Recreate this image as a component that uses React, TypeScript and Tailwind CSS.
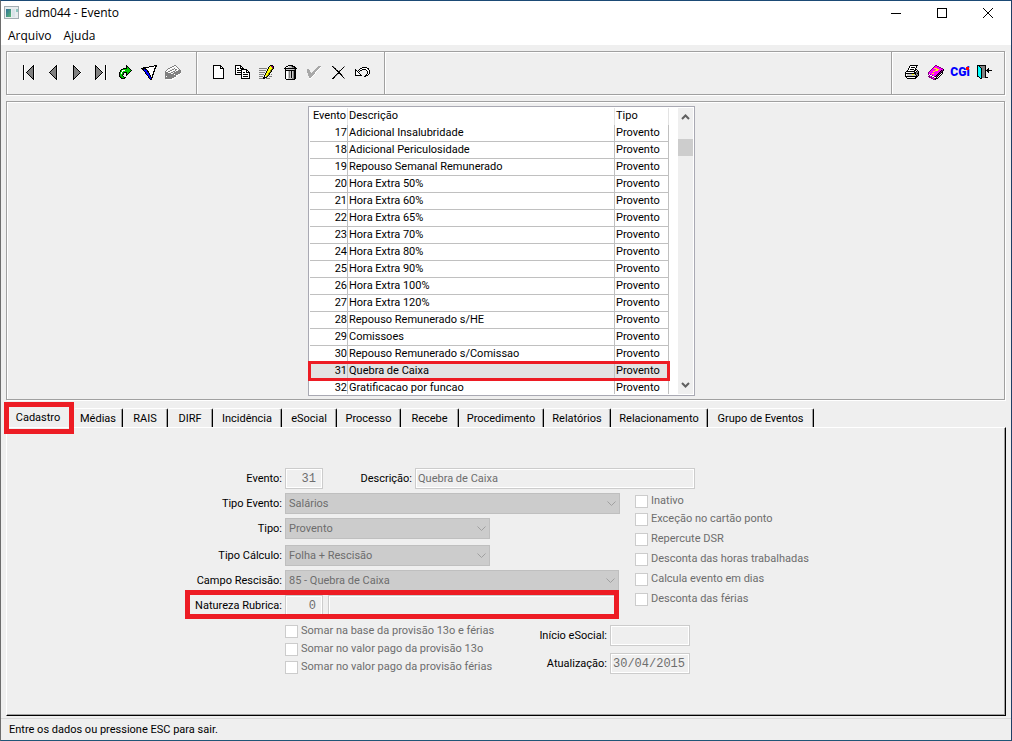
import clsx from 'clsx';
import type { ReactNode } from 'react';

const events = [
  [17, 'Adicional Insalubridade'],
  [18, 'Adicional Periculosidade'],
  [19, 'Repouso Semanal Remunerado'],
  [20, 'Hora Extra 50%'],
  [21, 'Hora Extra 60%'],
  [22, 'Hora Extra 65%'],
  [23, 'Hora Extra 70%'],
  [24, 'Hora Extra 80%'],
  [25, 'Hora Extra 90%'],
  [26, 'Hora Extra 100%'],
  [27, 'Hora Extra 120%'],
  [28, 'Repouso Remunerado s/HE'],
  [29, 'Comissoes'],
  [30, 'Repouso Remunerado s/Comissao'],
  [31, 'Quebra de Caixa'],
  [32, 'Gratificacao por funcao'],
] as const;

const tabs = [
  { label: 'Médias', width: 'w-[49px]' },
  { label: 'RAIS', width: 'w-[45px]' },
  { label: 'DIRF', width: 'w-[45px]' },
  { label: 'Incidência', width: 'w-[69px]' },
  { label: 'eSocial', width: 'w-[55px]' },
  { label: 'Processo', width: 'w-[64px]' },
  { label: 'Recebe', width: 'w-[58px]' },
  { label: 'Procedimento', width: 'w-[85px]' },
  { label: 'Relatórios', width: 'w-[67px]' },
  { label: 'Relacionamento', width: 'w-[97px]' },
  { label: 'Grupo de Eventos', width: 'w-[106px]' },
];

const palette: Record<string, string> = {
  k: '#000000',
  g: '#808080',
  l: '#a8a8a8',
  s: '#c8c8c8',
  w: '#ffffff',
  b: '#0000ff',
  n: '#000080',
  y: '#ffff00',
  o: '#808000',
  m: '#ff00ff',
  p: '#800080',
  c: '#00ffff',
  t: '#008080',
  e: '#00c800',
  d: '#006400',
};

// One character per pixel, a dot is transparent
function PixelIcon({ rows }: { rows: string[] }) {
  const width = Math.max(...rows.map((row) => row.length));
  return (
    <svg
      width={width}
      height={rows.length}
      viewBox={`0 0 ${width} ${rows.length}`}
      shapeRendering="crispEdges"
      aria-hidden="true"
    >
      {rows.map((row, y) =>
        row
          .split('')
          .map((char, x) =>
            palette[char] ? (
              <rect
                key={`${x}-${y}`}
                x={x}
                y={y}
                width="1"
                height="1"
                fill={palette[char]}
              />
            ) : null
          )
      )}
    </svg>
  );
}

const icons = {
  first: [
    'kw........kw',
    'kw.......kkw',
    'kw......kgkw',
    'kw.....kggkw',
    'kw....kgggkw',
    'kw...kggggkw',
    'kw..kgggggkw',
    'kw.kggggggkw',
    'kw..kgggggkw',
    'kw...kggggkw',
    'kw....kgggkw',
    'kw.....kggkw',
    'kw......kgkw',
    'kw.......kkw',
    'kw........kw',
  ],
  previous: [
    '.......kw',
    '......kkw',
    '.....kgkw',
    '....kggkw',
    '...kgggkw',
    '..kggggkw',
    '.kgggggkw',
    'kggggggkw',
    '.kgggggkw',
    '..kggggkw',
    '...kgggkw',
    '....kggkw',
    '.....kgkw',
    '......kkw',
    '.......kw',
  ],
  next: [
    'kw.......',
    'kkw......',
    'kgkw.....',
    'kggkw....',
    'kgggkw...',
    'kggggkw..',
    'kgggggkw.',
    'kggggggkw',
    'kgggggkw.',
    'kggggkw..',
    'kgggkw...',
    'kggkw....',
    'kgkw.....',
    'kkw......',
    'kw.......',
  ],
  last: [
    'kw........kw',
    'kkw.......kw',
    'kgkw......kw',
    'kggkw.....kw',
    'kgggkw....kw',
    'kggggkw...kw',
    'kgggggkw..kw',
    'kggggggkw.kw',
    'kgggggkw..kw',
    'kggggkw...kw',
    'kgggkw....kw',
    'kggkw.....kw',
    'kgkw......kw',
    'kkw.......kw',
    'kw........kw',
  ],
  go: [
    '.......k.....',
    '.......kk....',
    '.......kek...',
    '....kkkkeek..',
    '..kkeeeeeeek.',
    '.kewwweeeeeek',
    '.keweeeeeeek.',
    'kewedkkkeek..',
    'kewek..kek...',
    'keedk..kk....',
    'keek...k.....',
    'kdeek........',
    '.kdeekk......',
    '..kkkk.......',
  ],
  filter: [
    '.............kkk',
    '........kkkkkwkk',
    '..kkkkkkwwwwwwk.',
    'kkkkkwwwwwwwwkk.',
    '.kkbkkwwwwwwwk..',
    '..kbbbkwwwwwwk..',
    '...kbbkkwwwwkk..',
    '....kbbkwwwwk...',
    '....kbbbkwwwk...',
    '.....kbbkwwkk...',
    '......kbbkwk....',
    '.......kbkwk....',
    '.......kbbkk....',
    '........kbk.....',
    '.........kk.....',
  ],
  box: [
    '.........gg......',
    '.......ggwwg.....',
    '.....ggww..wg....',
    '...ggww..gwwwg...',
    '..gww..ggwggw.g..',
    '.gww.ggww.gwwggg.',
    'gwwggww.gg.ggggg.',
    'gggww.gg.ggggggg.',
    'ggggggw.gggggggw.',
    'gggggggggwgggww..',
    'gggggggggggww....',
    'gwgggggggggw.....',
    'gggggggggww......',
    'gggggggww........',
    '.wwwwwww.........',
  ],
  page: [
    'kkkkkkkk...',
    'kwwwwwwkk..',
    'kwwwwwwkwk.',
    'kwwwwwwkkkk',
    'kwwwwwwwwwk',
    'kwwwwwwwwwk',
    'kwwwwwwwwwk',
    'kwwwwwwwwwk',
    'kwwwwwwwwwk',
    'kwwwwwwwwwk',
    'kwwwwwwwwwk',
    'kwwwwwwwwwk',
    'kwwwwwwwwwk',
    'kkkkkkkkkkk',
  ],
  copy: [
    'kkkkkk.........',
    'kwwwwkk........',
    'kwwwwkwk.......',
    'kwkkwkkkk......',
    'kwwwwwkkkkkk...',
    'kwkkkkkwwwwkk..',
    'kwwwwwkwwwwkwk.',
    'kwkkkkkwkkwkkkk',
    'kwwwwwkwwwwwwwk',
    'kkkkkkkwkkkkkwk',
    '......kwwwwwwwk',
    '......kwkkkkkwk',
    '......kwwwwwwwk',
    '......kkkkkkkkk',
  ],
  edit: [
    '...........kkk.',
    '..........kyppk',
    '.........kyyypk',
    'gggggggg.kyyyok',
    '........kyyyok.',
    'ggggggg.kyyok..',
    '.......kyyyok..',
    'gggggg.kyyok...',
    '......kyyok....',
    'ggggg.kyyok.g..',
    '.....kyyok.....',
    'gggg.kwok.ggg..',
    '....kkkk.......',
    'ggggkk.gggg....',
  ],
  trash: [
    '....kkkkk....',
    '..kkwssgkkk..',
    '.kwwssssggkk.',
    'kkkkkkkkkkkkk',
    '.kssssssssgk.',
    '.kkkkkkkkkkk.',
    '.kwwsgsksgkk.',
    '.kwwsgsksgkk.',
    '.kwwsgsksgkk.',
    '.kwwsgsksgkk.',
    '.kwwsgsksgkk.',
    '.kwwsgsksgkk.',
    '.kwwsgsksgkk.',
    '.kwwssssggkk.',
    '..kkkkkkkkk..',
  ],
  check: [
    '...........lll',
    '..........lllw',
    '.........lllw.',
    'll......lllw..',
    'lll....lllw...',
    'lll...lllw....',
    'llll.lllw.....',
    '.lllllllw.....',
    '.llllllw......',
    '.lllllw.......',
    '..lllw........',
    '..llw.........',
    '..ww..........',
  ],
  cancel: [
    'kg..........g',
    '.kg........k.',
    '..kk......k..',
    '...kg....k...',
    '....kk.gk....',
    '.....kkk.....',
    '......kk.....',
    '.....kkkk....',
    '....kg..kk...',
    '...kg....kg..',
    '..kg......k..',
    '.kk........k.',
    'kk..........g',
  ],
  undo: [
    '.......kkkkk...',
    '.....kkwwwwwkk.',
    'k...kwwkkkkwwk.',
    'kk.kwkk....kwwk',
    'kwkwk.......kwk',
    'kwwk........kwk',
    'kwwwk.......kwk',
    'kwwwwk.....kwk.',
    'kkkkkkk...kkk..',
    '.........kk....',
  ],
  print: [
    '.....kkkkkkkk.',
    '....kwwwwwwk..',
    '....kwkkkkwk..',
    '...kwwwwwwk...',
    '...kwkkkkwkk..',
    '..kwwwwwwkkwk.',
    '.kkkkkkkkkwkgk',
    'kwwwwwwwwkkggk',
    'kkkkkkkkkkkgkk',
    'kwsssssyyskggk',
    'kwssssssssskgk',
    'kkkkkkkkkkkkk.',
    '.kwwwwwwwwkk..',
    '..kkkkkkkkk...',
  ],
  help: [
    '.......pp.......',
    '......pmmpp.....',
    '.....pmmmmmpp...',
    '....pmyyymmmmpp.',
    '...pmmmmyyymmmmk',
    '..pmmmmyyymmmkpk',
    '.pmmmyymmmmmkpk.',
    'pmmmmmmmmmmkpkk.',
    'pmmmyymmmmkpkwk.',
    'pwpmmmmmmkpkwk..',
    '.pwwpmmmkpkwk...',
    'ppmpwwpkpkwk....',
    '.pppmpwwkwk.....',
    '...ppmpkkk......',
    '.....ppk........',
  ],
  exit: [
    'kkkkkkkkk......',
    'kckgggggk......',
    'kcckggggk......',
    'kccckgggk..k...',
    'kccckgggk.kk...',
    'kccckgggkkkkkkk',
    'kccckgggk.kk...',
    'kccckgggk..k...',
    'kccckgggk......',
    'kccckgggk......',
    'kccckgggk......',
    'kkcckgggk......',
    '..kckgggkkk....',
    '...kk..........',
  ],
};

function ToolButton({
  label,
  icon,
  disabled,
}: {
  label: string;
  icon: string[];
  disabled?: boolean;
}) {
  return (
    <button
      type="button"
      aria-label={label}
      disabled={disabled}
      className="flex h-6 w-6 shrink-0 items-center justify-center"
    >
      <PixelIcon rows={icon} />
    </button>
  );
}

function Field({
  id,
  label,
  labelWidth = 'w-[97px]',
  children,
}: {
  id: string;
  label: string;
  labelWidth?: string;
  children: ReactNode;
}) {
  return (
    <div className="flex h-[21px] items-center gap-[3px]">
      <label
        htmlFor={id}
        className={clsx('shrink-0 text-right whitespace-nowrap', labelWidth)}
      >
        {label}
      </label>
      {children}
    </div>
  );
}

function TextBox({
  id,
  value,
  className,
  ariaLabel,
}: {
  id: string;
  value: string;
  className: string;
  ariaLabel?: string;
}) {
  return (
    <input
      id={id}
      type="text"
      defaultValue={value}
      aria-label={ariaLabel}
      disabled
      className={clsx(
        'h-[21px] border border-[#cccccc] bg-[#efefef] px-0.5 text-[#6d6d6d] shadow-[inset_0_0_0_1px_#fff]',
        className
      )}
    />
  );
}

function Dropdown({
  id,
  value,
  width,
}: {
  id: string;
  value: string;
  width: string;
}) {
  return (
    <div className={clsx('relative h-[21px]', width)}>
      <select
        id={id}
        disabled
        className="h-full w-full appearance-none border border-[#bfbfbf] bg-[#cccccc] px-[3px] text-[#6d6d6d] opacity-100"
      >
        <option>{value}</option>
      </select>
      <svg
        className="pointer-events-none absolute top-2 right-1"
        width="9"
        height="6"
        viewBox="0 0 9 6"
        fill="none"
        stroke="#a0a0a0"
      >
        <path d="M0.5 0.5 4.5 4.5 8.5 0.5" />
      </svg>
    </div>
  );
}

function Check({ label, height }: { label: string; height: string }) {
  return (
    <label
      className={clsx(
        'flex items-center gap-[3px] whitespace-nowrap text-[#6d6d6d]',
        height
      )}
    >
      <input
        type="checkbox"
        disabled
        className="size-[13px] shrink-0 appearance-none border border-[#cccccc] bg-white"
      />
      {label}
    </label>
  );
}

const etched =
  'border border-[#a0a0a0] shadow-[inset_1px_1px_0_#fff,1px_1px_0_#fff]';

export default function App() {
  return (
    <div className="flex min-h-screen flex-col border border-t-[#1b4a75] border-r-[#1f3f66] border-b-[#1f5677] border-l-[#6d6d6d] bg-[#efefef] font-['Roboto',sans-serif] text-[11px] leading-4 text-black">
      <header className="bg-white font-['Open_Sans',sans-serif] text-[12px]">
        <div className="flex h-6 items-center pl-[3px]">
          <svg width="16" height="14" viewBox="0 0 16 14" aria-hidden="true">
            <defs>
              <linearGradient id="screen" x1="0" y1="0" x2="1" y2="1">
                <stop offset="0" stopColor="#2c6f9a" />
                <stop offset="1" stopColor="#5cb874" />
              </linearGradient>
            </defs>
            <rect x="0.5" y="0.5" width="14" height="12" fill="#e8edef" stroke="#a3adb2" />
            <rect x="2" y="3" width="5" height="8" fill="url(#screen)" />
            <path d="M8 3h3v8H8z" fill="#d8e3e8" />
            <path d="M12 3h2v3h-2z" fill="#8fc7c0" />
          </svg>
          <h1 className="pl-[5px]">adm044 - Evento</h1>
          <div className="ml-auto flex">
            <button type="button" aria-label="Minimizar" className="flex h-6 w-[46px] items-center justify-center">
              <svg width="10" height="10" viewBox="0 0 10 10" stroke="#000">
                <path d="M0 5.5h10" />
              </svg>
            </button>
            <button type="button" aria-label="Maximizar" className="flex h-6 w-[46px] items-center justify-center">
              <svg width="10" height="10" viewBox="0 0 10 10" fill="none" stroke="#000">
                <rect x="0.5" y="0.5" width="9" height="9" />
              </svg>
            </button>
            <button type="button" aria-label="Fechar" className="flex h-6 w-[46px] items-center justify-center">
              <svg width="10" height="10" viewBox="0 0 10 10" fill="none" stroke="#000">
                <path d="M0 0 10 10M10 0 0 10" />
              </svg>
            </button>
          </div>
        </div>
        <nav className="flex h-5 items-center gap-3 pt-0.5 pl-[7px]">
          <button type="button">Arquivo</button>
          <button type="button">Ajuda</button>
        </nav>
      </header>

      <div className={clsx('mt-1.5 mr-1.5 ml-[5px] flex h-[44px] items-center', etched)}>
        <div className="flex h-full w-[190px] items-center border-r border-[#a0a0a0] pb-0.5 pl-2.5">
          <ToolButton label="Primeiro" icon={icons.first} />
          <ToolButton label="Anterior" icon={icons.previous} />
          <ToolButton label="Próximo" icon={icons.next} />
          <ToolButton label="Último" icon={icons.last} />
          <ToolButton label="Ir para" icon={icons.go} />
          <ToolButton label="Filtrar" icon={icons.filter} />
          <ToolButton label="Limpar" icon={icons.box} disabled />
        </div>
        <div className="flex h-full w-[188px] items-center border-r border-[#a0a0a0] pb-0.5 pl-[9px] shadow-[inset_1px_0_0_#fff]">
          <ToolButton label="Novo" icon={icons.page} />
          <ToolButton label="Copiar" icon={icons.copy} />
          <ToolButton label="Editar" icon={icons.edit} />
          <ToolButton label="Excluir" icon={icons.trash} />
          <ToolButton label="Confirmar" icon={icons.check} disabled />
          <ToolButton label="Cancelar" icon={icons.cancel} />
          <ToolButton label="Desfazer" icon={icons.undo} />
        </div>
        <div className="h-full flex-1 shadow-[inset_1px_0_0_#fff]" />
        <div className="flex h-full w-[113px] items-center border-l border-[#a0a0a0] pb-0.5 pl-2 shadow-[inset_1px_0_0_#fff]">
          <ToolButton label="Imprimir" icon={icons.print} />
          <ToolButton label="Ajuda" icon={icons.help} />
          <button
            type="button"
            className="flex h-6 w-6 items-center justify-center text-[12px] font-black text-[#0000ff]"
          >
            CG<span className="relative">i<span className="absolute top-[3px] left-0 size-[3px] bg-[#ff0000]" /></span>
          </button>
          <ToolButton label="Sair" icon={icons.exit} />
        </div>
      </div>

      <section className={clsx('mt-1.5 mr-1.5 ml-[5px] flex h-[299px] justify-center pt-1 pr-2', etched)}>
        <div className="relative h-[290px] w-[387px] border border-[#a9a9b3] bg-white p-px">
          <div className="flex h-full justify-between overflow-hidden">
            <table className="h-fit w-[359px] table-fixed border-separate border-spacing-0">
              <thead>
                <tr className="h-[17px] leading-[15px]">
                  <th className="w-[38px] border-r border-[#e3e3e3] p-0 px-px pb-0.5 text-right font-normal">Evento</th>
                  <th className="border-r border-[#e3e3e3] p-0 pb-0.5 pl-px text-left font-normal">Descrição</th>
                  <th className="w-[54px] border-r border-[#e3e3e3] p-0 pb-0.5 pl-px text-left font-normal">Tipo</th>
                </tr>
              </thead>
              <tbody>
                {events.map(([code, description]) => (
                  <tr key={code} className={clsx('h-[17px] leading-4', code === 31 && 'bg-[#e3e3e3]')}>
                    <td className="border-r border-b border-[#c0c0c0] p-0 text-right">{code}</td>
                    <td className="border-r border-b border-[#c0c0c0] p-0 pl-px">{description}</td>
                    <td className="border-r border-b border-[#c0c0c0] p-0 pl-px">Provento</td>
                  </tr>
                ))}
              </tbody>
            </table>
            <div className="flex w-[15px] flex-col items-center bg-[#efefef]">
              <svg className="mt-1.5" width="9" height="6" viewBox="0 0 9 6" fill="none" stroke="#606060" strokeWidth="2">
                <path d="M1 5 4.5 1.5 8 5" />
              </svg>
              <div className="mt-[19px] h-[17px] w-full bg-[#cdcdcd]" />
              <svg className="mt-auto mb-1.5" width="9" height="6" viewBox="0 0 9 6" fill="none" stroke="#606060" strokeWidth="2">
                <path d="M1 1 4.5 4.5 8 1" />
              </svg>
            </div>
          </div>
          <div className="pointer-events-none absolute top-[254px] -left-px h-5 w-[362px] border-3 border-[#ed1c24]" />
        </div>
      </section>

      <div className="mx-[5px] mt-[7px] flex flex-1 flex-col">
        <div role="tablist" className="flex h-5 items-end">
          <button
            type="button"
            role="tab"
            aria-selected="true"
            className="relative h-full w-[68px] pt-0.5 pr-1"
          >
            Cadastro
            <span className="pointer-events-none absolute -top-[5px] -left-0.5 z-10 h-8 w-[70px] border-5 border-[#ed1c24]" />
          </button>
          {tabs.map((tab) => (
            <button
              key={tab.label}
              type="button"
              role="tab"
              aria-selected="false"
              className={clsx(
                'h-[19px] shrink-0 rounded-t-xs border-t border-r border-t-white border-r-black pt-0.5 whitespace-nowrap shadow-[inset_-1px_0_0_#a0a0a0]',
                tab.width
              )}
            >
              {tab.label}
            </button>
          ))}
        </div>

        <div
          role="tabpanel"
          className="flex flex-1 justify-center border border-t-white border-r-black border-b-black border-l-white pt-10 pr-[22px] shadow-[inset_-1px_-1px_0_#a0a0a0]"
        >
          <form className="w-[620px]">
            <div className="flex">
              <Field id="evento" label="Evento:">
                <TextBox id="evento" value="31" className="w-[38px] pr-1.5 text-right font-['Liberation_Mono',monospace] text-[12px]" />
              </Field>
              <Field id="descricao" label="Descrição:" labelWidth="w-[89px]">
                <TextBox id="descricao" value="Quebra de Caixa" className="w-[280px]" />
              </Field>
            </div>

            <div className="mt-1 flex gap-[15px]">
              <div className="flex w-[435px] flex-col gap-1">
                <Field id="tipo-evento" label="Tipo Evento:">
                  <Dropdown id="tipo-evento" value="Salários" width="w-[335px]" />
                </Field>
                <Field id="tipo" label="Tipo:">
                  <Dropdown id="tipo" value="Provento" width="w-[205px]" />
                </Field>
                <div className="mt-0.5">
                  <Field id="tipo-calculo" label="Tipo Cálculo:">
                    <Dropdown id="tipo-calculo" value="Folha + Rescisão" width="w-[205px]" />
                  </Field>
                </div>
                <Field id="campo-rescisao" label="Campo Rescisão:">
                  <Dropdown id="campo-rescisao" value="85 - Quebra de Caixa" width="w-[334px]" />
                </Field>
                <div className="relative">
                  <Field id="natureza" label="Natureza Rubrica:">
                    <TextBox id="natureza" value="0" className="w-[38px] pr-1.5 text-right font-['Liberation_Mono',monospace] text-[12px]" />
                    <TextBox id="natureza-descricao" ariaLabel="Descrição da natureza" value="" className="ml-0.5 w-[290px]" />
                  </Field>
                  <div className="pointer-events-none absolute -top-[5px] right-px -bottom-[3px] left-0 border-5 border-[#ed1c24]" />
                </div>
              </div>
              <div>
                <Check label="Inativo" height="h-4" />
                <Check label="Exceção no cartão ponto" height="h-5" />
                <Check label="Repercute DSR" height="h-5" />
                <Check label="Desconta das horas trabalhadas" height="h-5" />
                <Check label="Calcula evento em dias" height="h-5" />
                <Check label="Desconta das férias" height="h-5" />
              </div>
            </div>

            <div className="mt-1.5 flex pl-[100px]">
              <div className="w-[222px]">
                <Check label="Somar na base da provisão 13o e férias" height="h-[18px]" />
                <Check label="Somar no valor pago da provisão 13o" height="h-[18px]" />
                <Check label="Somar no valor pago da provisão férias" height="h-[18px]" />
              </div>
              <div className="mt-[3px] flex flex-col gap-[7px]">
                <Field id="inicio-esocial" label="Início eSocial:" labelWidth="w-[100px]">
                  <TextBox id="inicio-esocial" value="" className="w-20" />
                </Field>
                <Field id="atualizacao" label="Atualização:" labelWidth="w-[100px]">
                  <TextBox id="atualizacao" value="30/04/2015" className="w-20 font-['Liberation_Mono',monospace] text-[12px]" />
                </Field>
              </div>
            </div>
          </form>
        </div>
      </div>

      <footer className="mt-0.5 flex h-[22px] items-center border-t border-[#d9d9d9] pl-2">
        Entre os dados ou pressione ESC para sair.
      </footer>
    </div>
  );
}
